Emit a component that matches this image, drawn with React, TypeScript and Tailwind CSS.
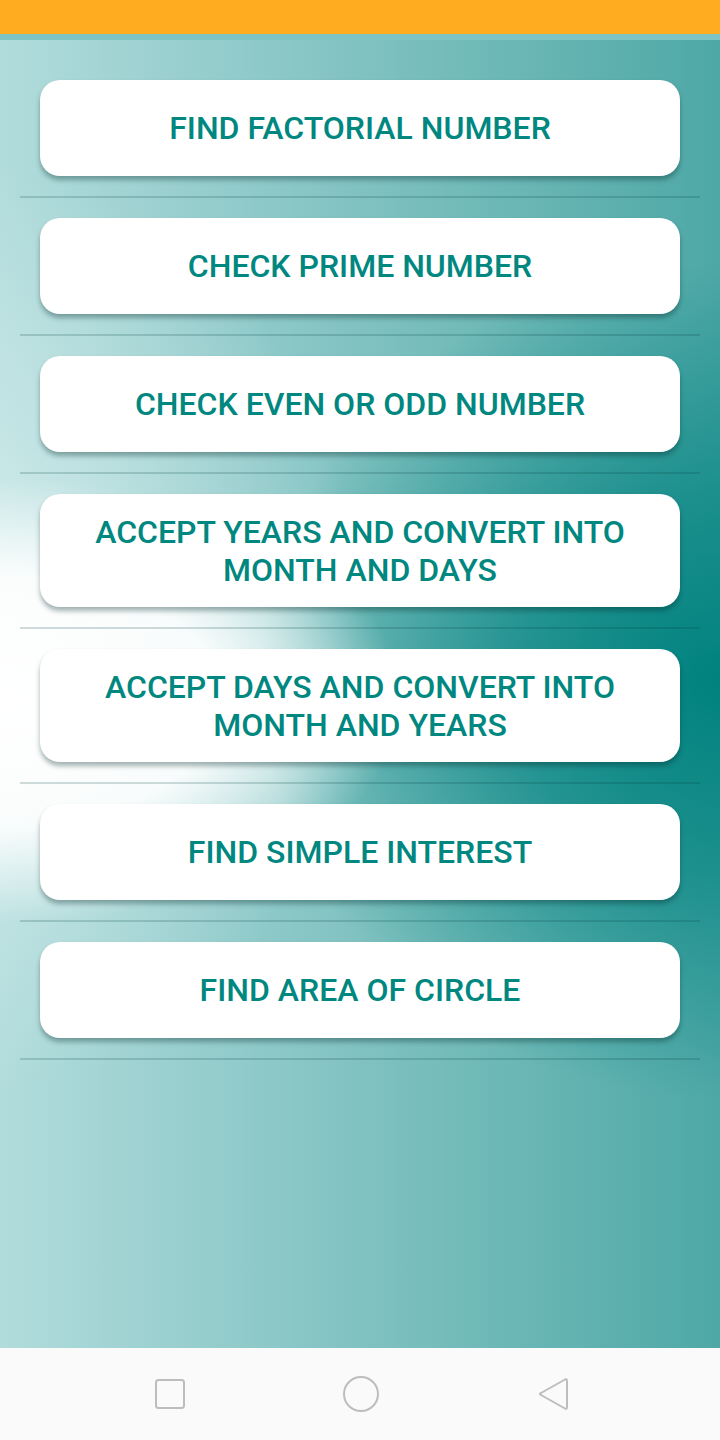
const ITEMS = [
    "FIND FACTORIAL NUMBER",
    "CHECK PRIME NUMBER",
    "CHECK EVEN OR ODD NUMBER",
    "ACCEPT YEARS AND CONVERT INTO MONTH AND DAYS",
    "ACCEPT DAYS AND CONVERT INTO MONTH AND YEARS",
    "FIND SIMPLE INTEREST",
    "FIND AREA OF CIRCLE",
];

function MenuButton({ label }: { label: string }) {
    return (
        <button
            type="button"
            className="mx-5 flex min-h-[96px] items-center justify-center rounded-[20px] bg-white px-10 py-[18.5px] text-center text-[32px] font-medium leading-[38px] text-[#00877f] shadow-[0_4px_5px_rgba(0,40,40,0.35)]"
        >
            {label}
        </button>
    );
}

export default function App() {
    return (
        <div className="flex h-[1440px] w-[720px] flex-col font-['Roboto','Liberation_Sans',sans-serif]">
            <div className="h-[34px] bg-[#ffac20]" />
            <div className="h-[6px] bg-[#7fc4c4]" />

            <div className="flex flex-1 flex-col bg-[radial-gradient(ellipse_56%_17%_at_0%_50.5%,#ffffff_0%,rgba(255,255,255,0.92)_55%,rgba(255,255,255,0)_100%),radial-gradient(ellipse_64%_32%_at_100%_49%,#00827f_0%,rgba(0,130,127,0.65)_45%,rgba(0,130,127,0)_100%),radial-gradient(ellipse_50%_35%_at_0%_45%,rgba(225,242,242,0.7)_0%,rgba(225,242,242,0)_100%),linear-gradient(to_right,#b2dcdc,#4ea8a6)] px-5 pt-10">
                {ITEMS.map((label) => (
                    <div key={label} className="flex flex-col">
                        <MenuButton label={label} />
                        <div className="mt-5 mb-5 h-[2px] bg-[rgba(0,60,60,0.18)]" />
                    </div>
                ))}
            </div>

            <div className="flex h-[92px] items-center justify-between bg-[#fafafa] pl-[154px] pr-[150px]">
                <svg width="32" height="32" viewBox="0 0 32 32" fill="none" stroke="#bdbdbd" strokeWidth="2">
                    <rect x="2" y="2" width="28" height="28" rx="2.5" />
                </svg>
                <svg width="38" height="38" viewBox="0 0 38 38" fill="none" stroke="#bdbdbd" strokeWidth="2">
                    <circle cx="19" cy="19" r="17" />
                </svg>
                <svg width="34" height="36" viewBox="0 0 34 36" fill="none" stroke="#bdbdbd" strokeWidth="2" strokeLinejoin="round">
                    <path d="M29 3.5 Q31 2.5 31 5 V31 Q31 33.5 29 32.5 L5 19 Q3 18 5 17 Z" />
                </svg>
            </div>
        </div>
    );
}
